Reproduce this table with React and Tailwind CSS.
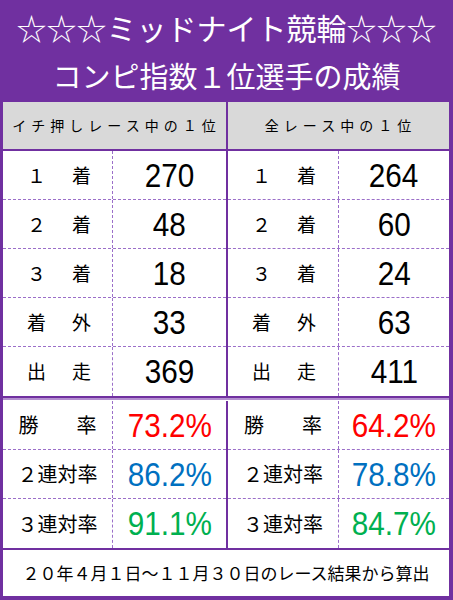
const leftRows = [
  ["１", "着", "270"],
  ["２", "着", "48"],
  ["３", "着", "18"],
  ["着", "外", "33"],
  ["出", "走", "369"],
];
const rightRows = [
  ["１", "着", "264"],
  ["２", "着", "60"],
  ["３", "着", "24"],
  ["着", "外", "63"],
  ["出", "走", "411"],
];
const leftRates = [
  ["勝　率", "73.2%", "text-[#ff0000]"],
  ["２連対率", "86.2%", "text-[#0070c0]"],
  ["３連対率", "91.1%", "text-[#00b050]"],
];
const rightRates = [
  ["勝　率", "64.2%", "text-[#ff0000]"],
  ["２連対率", "78.8%", "text-[#0070c0]"],
  ["３連対率", "84.7%", "text-[#00b050]"],
];

const jp = { fontFamily: '"Noto Sans CJK JP", "Noto Sans", sans-serif' };
const num = { fontFamily: '"Liberation Sans", Arial, sans-serif' };

function Value({ children, color = "text-black" }) {
  return (
    <span className={`inline-block scale-x-90 text-[33px] leading-none ${color}`} style={num}>
      {children}
    </span>
  );
}

function CountColumn({ rows, labelW }) {
  return (
    <div className="flex flex-col bg-white">
      {rows.map(([a, b, v], i) => (
        <div
          key={i}
          className={`flex h-[49px] ${i < rows.length - 1 ? "border-b border-dashed border-[#9b6fc9]" : ""}`}
        >
          <div
            className={`${labelW} flex items-center border-r border-dashed border-[#9b6fc9] text-[19px] text-black`}
            style={jp}
          >
            <span className="ml-[24px] w-[19px] text-center">{a}</span>
            <span className="ml-[26px]">{b}</span>
          </div>
          <div className="flex flex-1 items-center justify-center">
            <Value>{v}</Value>
          </div>
        </div>
      ))}
    </div>
  );
}

function RateColumn({ rows, labelW }) {
  return (
    <div className="flex flex-col bg-white">
      {rows.map(([label, v, color], i) => (
        <div
          key={i}
          className={`flex h-[49px] ${i < rows.length - 1 ? "border-b border-dashed border-[#9b6fc9]" : ""}`}
        >
          <div
            className={`${labelW} flex items-center justify-center border-r border-dashed border-[#9b6fc9] text-[20px] text-black`}
            style={jp}
          >
            {label === "勝　率" ? (
              <span className="flex w-[78px] justify-between">
                <span>勝</span>
                <span>率</span>
              </span>
            ) : (
              label
            )}
          </div>
          <div className="flex flex-1 items-center justify-center">
            <Value color={color}>{v}</Value>
          </div>
        </div>
      ))}
    </div>
  );
}

export default function App() {
  return (
    <div className="flex h-[600px] w-[453px] flex-col bg-[#7030a0]">
      {/* title */}
      <div className="flex h-[102px] flex-col items-center text-white" style={jp}>
        <div className="mt-[7px] text-[30px] leading-[40px]">☆☆☆ミッドナイト競輪☆☆☆</div>
        <div className="mt-[8px] text-[29px] leading-[40px]">コンピ指数１位選手の成績</div>
      </div>

      <div className="ml-[3px] mr-[4px] flex flex-col">
        {/* header */}
        <div className="grid h-[47px] grid-cols-[223px_221px] gap-x-[2px]">
          <div
            className="flex items-center justify-center bg-[#d9d9d9] pl-[4px] text-[14px] tracking-[5px] text-black"
            style={jp}
          >
            イチ押しレース中の１位
          </div>
          <div
            className="flex items-center justify-center bg-[#d9d9d9] pl-[4px] text-[14px] tracking-[5px] text-black"
            style={jp}
          >
            全レース中の１位
          </div>
        </div>

        <div className="mt-[2px] grid grid-cols-[223px_221px] gap-x-[2px]">
          <CountColumn rows={leftRows} labelW="w-[110px]" />
          <CountColumn rows={rightRows} labelW="w-[111px]" />
        </div>

        <div className="h-[2px] bg-[#7030a0]" />
        <div className="h-[2px] bg-[#b48fd0]" />
        <div className="h-[1px] bg-white" />

        <div className="grid grid-cols-[223px_221px] gap-x-[2px]">
          <RateColumn rows={leftRates} labelW="w-[110px]" />
          <RateColumn rows={rightRates} labelW="w-[111px]" />
        </div>

        <div
          className="mt-[2px] flex h-[46px] items-center justify-center bg-white text-[17px] text-black"
          style={jp}
        >
          ２０年４月１日～１１月３０日のレース結果から算出
        </div>
      </div>
    </div>
  );
}
